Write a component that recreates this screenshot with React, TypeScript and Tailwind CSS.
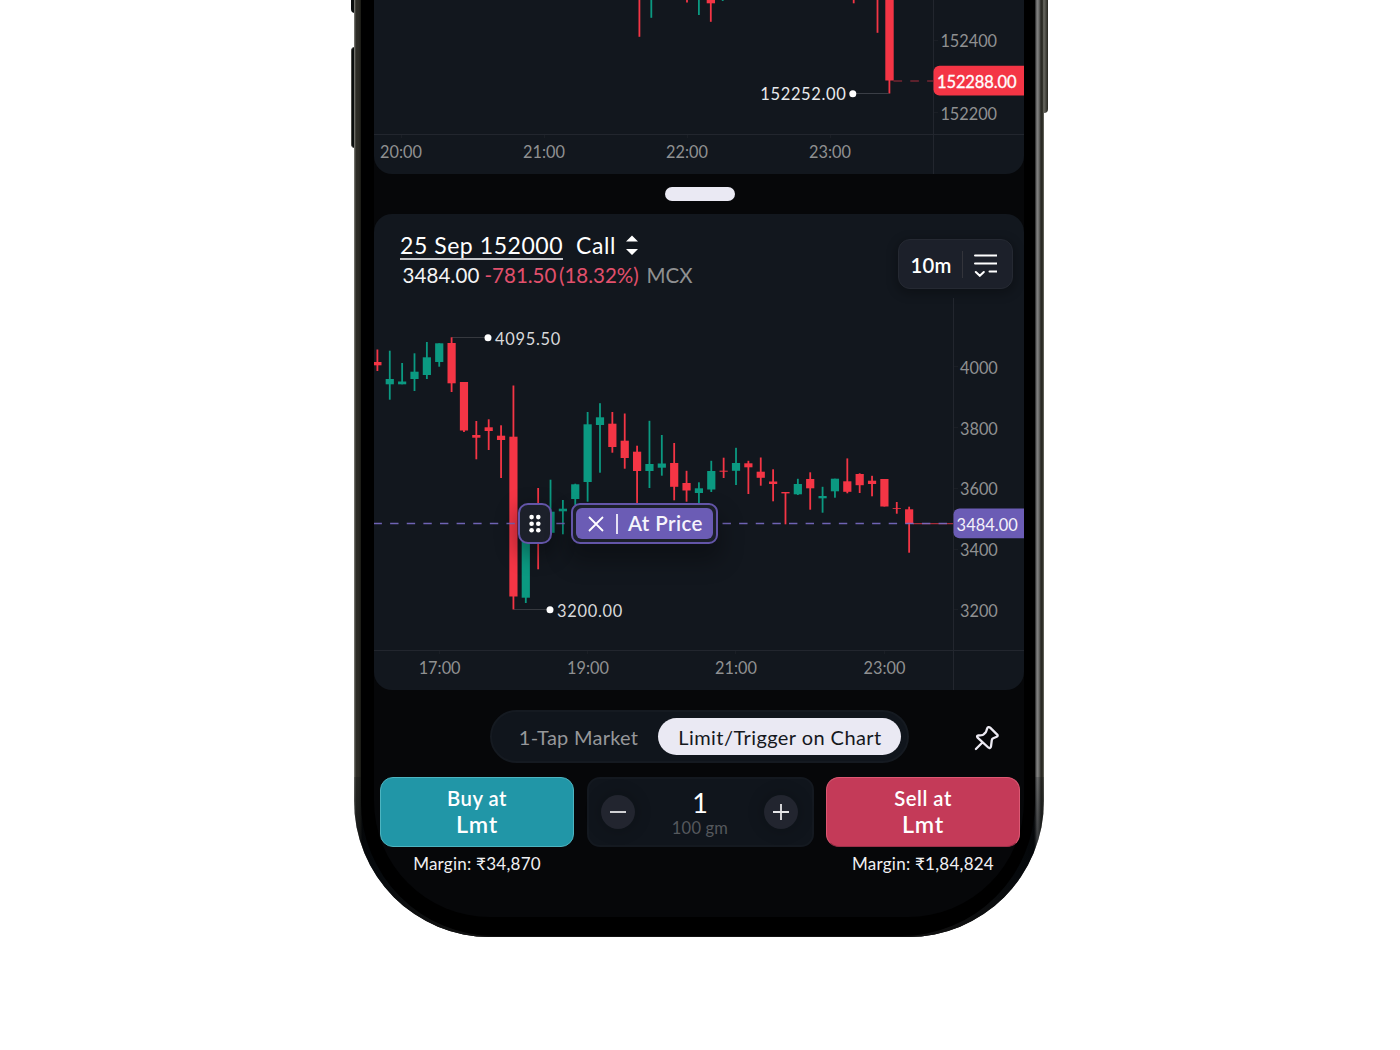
import React from "react";

type Candle = [up: 0 | 1, high: number, top: number, bottom: number, low: number];

const UP = "#0b9981";
const DOWN = "#f43545";
const MUTED = "#8f9091";
const AXIS = "#22262e";

const candles: Candle[] = [
  [0, 349.5, 362, 365.3, 371],
  [1, 350.7, 379, 384.3, 399.7],
  [1, 363, 381.5, 384.3, 384.3],
  [1, 353.3, 371.7, 379, 391],
  [1, 342, 357.3, 375, 379],
  [1, 343.3, 343.3, 362, 366.7],
  [0, 337.3, 343, 383.3, 392],
  [0, 382, 382, 430.5, 432],
  [0, 421, 435, 437.7, 459.3],
  [0, 419.3, 427.3, 431, 450],
  [0, 425.3, 435.7, 440, 478],
  [0, 385.5, 436.7, 596.5, 609.5],
  [1, 528, 530, 597.7, 603],
  [0, 488, 515, 523, 569.3],
  [1, 479.7, 511.7, 532.8, 534],
  [1, 500, 508.7, 511.3, 534.3],
  [1, 483.7, 484.3, 499, 505],
  [1, 412, 424.3, 482, 501.7],
  [1, 403.2, 417.3, 425, 472.7],
  [0, 412, 423.7, 447, 452.7],
  [0, 413.5, 440.7, 458, 468.7],
  [0, 445.7, 451.7, 471, 505],
  [1, 420.8, 464, 471, 488],
  [1, 435, 463.5, 467.7, 475.7],
  [0, 443, 463, 486.8, 500.3],
  [0, 470.8, 483, 490.5, 501.7],
  [1, 482.3, 488.3, 493, 504],
  [1, 460.8, 471, 489.5, 492],
  [0, 457.7, 470.7, 471.7, 478],
  [1, 447.8, 463, 470.8, 485],
  [0, 460.8, 463.3, 467.3, 494],
  [0, 457.5, 471.7, 477.8, 485.7],
  [0, 469.3, 481.5, 484, 501.3],
  [0, 492, 492, 493.4, 524.3],
  [1, 478.8, 484, 494.3, 495],
  [0, 472.3, 479, 488.3, 509.7],
  [1, 486.8, 496, 498.3, 512.7],
  [1, 478.7, 478.7, 491.3, 497.7],
  [0, 458.4, 481.3, 491.8, 493.3],
  [0, 473.3, 474, 485.2, 493],
  [0, 475.8, 480.7, 484, 496.3],
  [0, 479, 479, 506.5, 506.5],
  [0, 502, 508.2, 509, 513.7],
  [0, 506.7, 509.3, 523.8, 552.7],
];

const topWicks: [x: number, y: number, up: 0 | 1][] = [
  [639.4, 36.8, 0],
  [651.3, 17.8, 1],
  [687, 2.5, 0],
  [698.9, 15, 1],
  [710.8, 21.8, 0],
  [722.7, 1, 1],
  [853.7, 3.3, 0],
  [877.5, 32.8, 0],
  [889.4, 93.5, 0],
];

const lato = { fontFamily: "Lato, sans-serif" };

function AxisText({ x, y, children, anchor = "start" }: { x: number; y: number; children: React.ReactNode; anchor?: "start" | "middle" }) {
  return (
    <text x={x} y={y} textAnchor={anchor} fontSize="16.3" fill={MUTED}>
      {children}
    </text>
  );
}

function UnderlyingChart() {
  return (
    <svg className="block h-[174px] w-[650px] shrink-0 rounded-b-[18px] bg-[#12171e]" viewBox="374 0 650 174" style={lato}>
      <path d="M374 134.5H1024M933.5 0V174" stroke={AXIS} fill="none" />
      <path d="M401.5 135V138M544.5 135V138M687.5 135V138M830.5 135V138M934 40.5H938M934 112.5H938" stroke="#1a1e25" fill="none" />
      {topWicks.map(([x, y, up]) => (
        <rect key={x} x={x - 0.9} y={-2} width={1.8} height={y + 2} fill={up ? UP : DOWN} />
      ))}
      <rect x="706.7" y="-2" width="8.3" height="5.3" fill={DOWN} />
      <rect x="885.3" y="-2" width="8.4" height="82.5" fill={DOWN} />
      <path d="M893.5 81H933" stroke="#a52c3a" strokeWidth="1.2" strokeDasharray="8.6 8.2" />
      <path d="M855 93.5H889" stroke="#3a3e46" />
      <circle cx="852.8" cy="93.8" r="3.5" fill="#fff" />
      <text x="760.3" y="100.3" fontSize="16.5" fill="#e9eaec" textLength="85.5">152252.00</text>
      <AxisText x={940.4} y={46.6}>152400</AxisText>
      <AxisText x={940.4} y={119.6}>152200</AxisText>
      <path d="M1024 65.8H939.5a6 6 0 0 0-6 6v17.8a6 6 0 0 0 6 6H1024z" fill={DOWN} />
      <text x="937" y="87.6" fontSize="16.5" fill="#fff" stroke="#fff" strokeWidth="0.3" textLength="79.5">152288.00</text>
      <AxisText x={401} y={158} anchor="middle">20:00</AxisText>
      <AxisText x={544} y={158} anchor="middle">21:00</AxisText>
      <AxisText x={687} y={158} anchor="middle">22:00</AxisText>
      <AxisText x={830} y={158} anchor="middle">23:00</AxisText>
    </svg>
  );
}

function OptionChart() {
  return (
    <svg className="block h-[392px] w-[650px]" viewBox="374 298 650 392" style={lato}>
      <path d="M374 650.5H1024M953.5 298V690" stroke={AXIS} fill="none" />
      <path d="M439.5 651V654M587.5 651V654M735.5 651V654M884.5 651V654M954 366.5H958M954 427.5H958M954 488.5H958M954 549.5H958M954 609.5H958" stroke="#1a1e25" fill="none" />
      <path d="M452 337.5H486M514 609.5H548" stroke="#36393f" />
      {candles.map(([up, high, top, bottom, low], i) => {
        const x = 377.4 + i * 12.366;
        const color = up ? UP : DOWN;
        return (
          <g key={i} fill={color}>
            <rect x={x - 0.9} y={high} width={1.8} height={low - high} />
            <rect x={x - 4.1} y={top} width={8.2} height={bottom - top} />
          </g>
        );
      })}
      <path d="M913 523.7H953" stroke="#a52c3a" strokeWidth="1.2" />
      <path d="M373.5 523.5H953" stroke="#7a6bc4" strokeOpacity="0.9" strokeWidth="1.5" strokeDasharray="8.4 8.22" />
      <circle cx="488" cy="337.7" r="3.5" fill="#fff" />
      <text x="495" y="344.5" fontSize="16.4" fill="#d9dadc" textLength="65.3">4095.50</text>
      <circle cx="550" cy="609.8" r="3.5" fill="#fff" />
      <text x="557" y="616.7" fontSize="16.4" fill="#d9dadc" textLength="65.3">3200.00</text>
      <AxisText x={960} y={373.6}>4000</AxisText>
      <AxisText x={960} y={434.6}>3800</AxisText>
      <AxisText x={960} y={494.9}>3600</AxisText>
      <AxisText x={960} y={555.6}>3400</AxisText>
      <AxisText x={960} y={616.6}>3200</AxisText>
      <path d="M1024 508.5H959.5a6 6 0 0 0-6 6v17.8a6 6 0 0 0 6 6H1024z" fill="#6b5cb5" />
      <text x="956.6" y="530.6" fontSize="16.4" fill="#f3f1fa" textLength="61.2">3484.00</text>
      <AxisText x={439.6} y={673.6} anchor="middle">17:00</AxisText>
      <AxisText x={588} y={673.6} anchor="middle">19:00</AxisText>
      <AxisText x={736} y={673.6} anchor="middle">21:00</AxisText>
      <AxisText x={884.5} y={673.6} anchor="middle">23:00</AxisText>
    </svg>
  );
}

function OrderMarker() {
  return (
    <>
      <div className="absolute left-[144px] top-[289px] grid h-[41px] w-[34px] place-items-center rounded-[10px] border-2 border-[#6355a8] bg-[#1c202a] shadow-[0_8px_20px_4px_rgba(0,0,0,0.3)]">
        <svg className="h-5 w-3" viewBox="0 0 12 20" fill="#fff">
          {[3.4, 10, 16.6].map((y) => (
            <g key={y}>
              <circle cx="2.6" cy={y - 0.3} r="2.3" />
              <circle cx="9.3" cy={y - 0.3} r="2.3" />
            </g>
          ))}
        </svg>
      </div>
      <div className="absolute left-[197px] top-[289px] flex h-[41px] w-[147px] rounded-[9px] border-2 border-[#6355a8] bg-[#1c202a] p-[3px] shadow-[0_14px_22px_4px_rgba(0,0,0,0.28)]">
        <div className="flex flex-1 items-center rounded-md bg-[#6b5cb5] pl-[12px]">
          <svg className="size-4 shrink-0" viewBox="0 0 16 16" stroke="#fff" strokeWidth="1.8">
            <path d="M1 1L15 15M15 1L1 15" />
          </svg>
          <span className="ml-[12px] h-5 w-[2px] bg-[#e4e0f4]" />
          <span className="ml-[10px] whitespace-nowrap text-[20.5px] font-semibold leading-none tracking-[0.4px] text-[#f6f4fc]">At Price</span>
        </div>
      </div>
    </>
  );
}

function ChartHeader() {
  return (
    <div className="flex h-[84px] justify-between pl-[26px] pr-[11px]">
      <div className="whitespace-nowrap">
        <div className="mt-[18px] flex h-[28px] items-start text-[23px] leading-[26px] text-white">
          <span className="h-[28px] w-[163px] border-b-2 border-[#c4c5c9] tracking-[0.55px]">25 Sep 152000</span>
          <span className="ml-[13px] tracking-[0.6px]">Call</span>
          <svg className="ml-[9px] mt-[3px] h-5 w-[14px]" viewBox="0 0 14 20" fill="#fff">
            <path d="M7 0.5L13 6.5H1zM7 20L1 14H13z" />
          </svg>
        </div>
        <div className="mt-[3px] flex text-[20.5px] leading-[25px]">
          <span className="ml-[2.5px] w-[82px] tracking-[0.1px] text-[#f4f4f5]">3484.00</span>
          <span className="w-[74.5px] text-[#e2506c]">-781.50</span>
          <span className="w-[87.5px] text-[#e2506c]">(18.32%)</span>
          <span className="text-[#8f9091]">MCX</span>
        </div>
      </div>
      <div className="mt-[25px] flex h-[50px] w-[115px] items-center rounded-xl border border-[#252932] bg-[#1c202a] pl-[11.5px] shadow-[0_3px_10px_3px_rgba(0,0,0,0.22)]">
        <span className="mt-px w-[51.5px] text-[20.3px] font-semibold leading-[30px] tracking-[0.2px] text-white">10m</span>
        <span className="h-[27px] w-px bg-[#33343b]" />
        <svg className="ml-[10px] mt-[2px] h-6 w-6" viewBox="0 0 24 24" fill="none" stroke="#fff" strokeWidth="2" strokeLinecap="round">
          <path d="M2 2.5H23.5M2 10.5H23.5M16.5 18.5H23.5M2.8 19L6.8 22.8L10.8 19" />
        </svg>
      </div>
    </div>
  );
}

function OrderModes() {
  return (
    <div className="mt-[20px] flex h-[53px] items-center pl-[116px]">
      <div className="flex h-[53px] w-[419px] items-center rounded-full border-2 border-[#151a21] bg-[#10151c] pr-[6px]">
        <span className="flex-1 pl-[7px] text-center text-[20px] tracking-[0.25px] text-[#96979a]">1-Tap Market</span>
        <span className="flex h-[37px] w-[243px] items-center justify-center whitespace-nowrap rounded-full bg-[#eae9f3] pl-px text-[20px] tracking-[0.43px] text-[#15181d]">Limit/Trigger on Chart</span>
      </div>
      <svg className="ml-[64px] mt-[2px] h-7 w-7" viewBox="0 0 28 28" fill="none" stroke="#eceaf3" strokeWidth="2.3" strokeLinecap="round" strokeLinejoin="round">
        <path d="M2.9 25L8.9 19M17.4 3.9L24.2 10.6C25 11.5 24.8 12.4 23.8 12.8L20.2 14.3C19.3 14.7 18.9 15.3 18.8 16.2L18 22.3C17.8 23.9 16.4 24.5 15.3 23.5L4.6 13.6C3.6 12.6 4 11.6 5.3 11.5L8.6 11.2C9.4 11.1 10 10.8 10.6 10.3L12.4 8.7C12.9 8.2 13.1 7.7 13.3 7L14 4.9C14.6 3 16.1 2.6 17.4 3.9Z" />
      </svg>
    </div>
  );
}

function OrderButton({ side, className }: { side: string; className: string }) {
  return (
    <button className={"flex h-[70px] w-[194px] flex-col items-center justify-center rounded-[13px] border pb-px font-semibold text-white " + className}>
      <span className="text-[20.3px] leading-[25px] tracking-[0.5px]">{side} at</span>
      <span className="text-[23.3px] leading-[26px] tracking-[0.7px]">Lmt</span>
    </button>
  );
}

function Round({ plus }: { plus?: boolean }) {
  return (
    <button className="grid size-[34px] place-items-center rounded-full bg-[#22252f] shadow-[0_0_14px_4px_rgba(0,0,0,0.15)]">
      <svg className="size-4" viewBox="0 0 16 16" stroke="#e6e6e8" strokeWidth="1.8">
        <path d={plus ? "M0 8H16M8 0V16" : "M0 8H16"} />
      </svg>
    </button>
  );
}

function OrderBar() {
  return (
    <div className="mt-[14px] flex justify-between pl-[6px] pr-[4px]">
      <div className="flex flex-col items-center">
        <OrderButton side="Buy" className="border-[#4db4c0] bg-[#2196a7]" />
        <span className="mt-[6px] text-[17px] leading-[22px] tracking-[0.25px] text-[#f0f0f2]">Margin: ₹34,870</span>
      </div>
      <div className="flex h-[70px] w-[227px] items-center justify-between rounded-[13px] border-2 border-[#141920] bg-[#10151c] pl-[12px] pr-[13px]">
        <Round />
        <div className="flex flex-col items-center pl-px pt-[4px]">
          <span className="text-[27px] leading-[28px] text-white">1</span>
          <span className="text-[16.5px] leading-[22px] tracking-[0.2px] text-[#55585d]">100 gm</span>
        </div>
        <Round plus />
      </div>
      <div className="flex flex-col items-center">
        <OrderButton side="Sell" className="border-[#dd5873] border-b-[#9c3048] bg-[#c43a58]" />
        <span className="mt-[6px] text-[17px] leading-[22px] tracking-[0.25px] text-[#f0f0f2]">Margin: ₹1,84,824</span>
      </div>
    </div>
  );
}

export default function App() {
  return (
    <div className="h-[1050px] w-[1400px] overflow-hidden bg-white font-['Lato',sans-serif]">
      <div className="relative ml-[354px] h-[937px] w-[690px]">
        <span className="absolute -left-[3px] -top-2 h-[21px] w-[5px] rounded-l bg-[#0a0d0d]" />
        <span className="absolute -left-[3px] top-[47px] h-[101px] w-[5px] rounded-l border-l border-[#4a4a45] bg-[#0a0d0d]" />
        <span className="absolute -right-[4px] -top-2 h-[121px] w-[5px] rounded-r bg-[linear-gradient(90deg,#77776f,#25251f)]" />
        <div className="relative h-full rounded-b-[136px] bg-[linear-gradient(90deg,#85857f_0,#2d2c26_2px,#2a2923_5px,#191914_7px,#000_8px,#000_680px,#4a4a4a_682px,#858585_683px,#6b6b69_685px,#272722_687px,#34342c_689px,#85857f_690px)] pb-px pl-[7px] pr-[9px]">
          <span className="absolute inset-x-0 bottom-0 h-[160px] rounded-b-[136px] bg-[linear-gradient(180deg,rgba(8,12,16,0.2),rgba(8,12,16,0.8)_60%,#111)]" />
          <div className="relative h-full rounded-b-[134px] bg-black pl-[13px] pr-[11px]">
            <div className="flex h-[917px] flex-col rounded-b-[116px] bg-[#060709]">
              <UnderlyingChart />
              <div className="flex h-[40px] shrink-0 items-center justify-center pl-[2px]">
                <span className="h-[14px] w-[70px] rounded-full bg-[#eae9f3]" />
              </div>
              <div className="relative h-[476px] shrink-0 overflow-hidden rounded-[18px] bg-[#12171e]">
                <ChartHeader />
                <OptionChart />
                <OrderMarker />
              </div>
              <OrderModes />
              <OrderBar />
            </div>
          </div>
        </div>
      </div>
    </div>
  );
}
